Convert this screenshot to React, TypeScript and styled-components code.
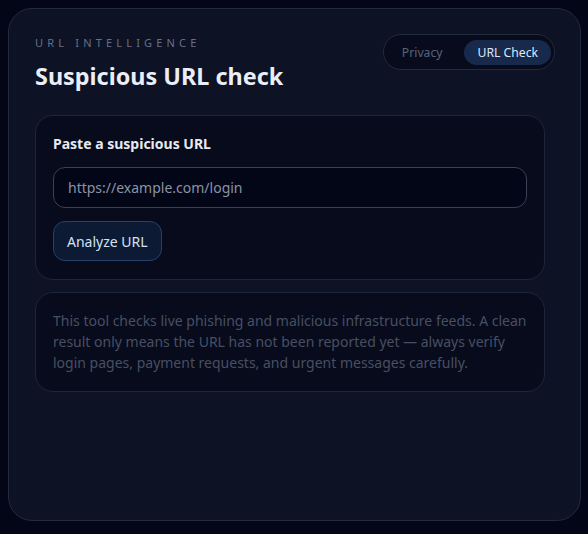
import React from 'react';
import styled, { createGlobalStyle } from 'styled-components';

const GlobalStyle = createGlobalStyle`
  html, body {
    margin: 0;
    background: #030617;
  }
  body {
    padding: 8px 8px 14px;
    font-family: 'Noto Sans', 'Open Sans', Arial, sans-serif;
  }
`;

const Card = styled.div`
  box-sizing: border-box;
  width: 573px;
  height: 513px;
  background: #0d1224;
  border: 1px solid #222a3d;
  border-radius: 24px;
  padding: 26px 26px;
`;

const Header = styled.div`
  display: flex;
  justify-content: space-between;
  align-items: flex-start;
`;

const TitleBlock = styled.div`
  display: flex;
  flex-direction: column;
`;

const Eyebrow = styled.div`
  font-size: 11px;
  letter-spacing: 0.38em;
  color: #66708a;
  line-height: 16px;
`;

const Title = styled.h1`
  margin: 10px 0 0;
  font-size: 23.4px;
  font-weight: 700;
  color: #eaeef6;
  line-height: 30px;
`;

const Toggle = styled.div`
  display: flex;
  gap: 9px;
  padding: 5px 3px 4px 5px;
  border: 1px solid #222a3d;
  background: #070b1b;
  border-radius: 999px;
  margin-top: -1px;
  margin-right: -1px;
`;

const ToggleItem = styled.button<{ $active?: boolean }>`
  font-family: inherit;
  font-size: 12.2px;
  line-height: 17px;
  height: 25px;
  border: none;
  border-radius: 999px;
  padding: 0 13px;
  background: ${(p) => (p.$active ? '#172a4c' : 'transparent')};
  color: ${(p) => (p.$active ? '#dde7fb' : '#5b6479')};
`;

const Panel = styled.div`
  box-sizing: border-box;
  max-width: 510px;
  background: #070b1b;
  border: 1px solid #1f2639;
  border-radius: 18px;
  padding: 18px 17px;
`;

const InputPanel = styled(Panel)`
  margin-top: 24px;
`;

const InfoPanel = styled(Panel)`
  margin-top: 12px;
  padding-top: 17px;
`;

const Label = styled.div`
  font-size: 14px;
  font-weight: 700;
  color: #e6eaf2;
  line-height: 20px;
`;

const UrlInput = styled.input`
  box-sizing: border-box;
  display: block;
  width: 100%;
  height: 41px;
  margin-top: 13px;
  padding: 0 14px;
  font-family: inherit;
  font-size: 14px;
  color: #c8cfdc;
  background: #030616;
  border: 1px solid #394156;
  border-radius: 12px;
  outline: none;
  &::placeholder {
    color: #8a93a6;
  }
`;

const AnalyzeButton = styled.button`
  display: block;
  margin-top: 13px;
  height: 40px;
  padding: 0 13px;
  font-family: inherit;
  font-size: 14px;
  color: #d4e1f5;
  background: #0c1a34;
  border: 1px solid #27416b;
  border-radius: 12px;
`;

const InfoText = styled.p`
  margin: 0;
  font-size: 14px;
  line-height: 21px;
  color: #474f63;
`;

const App: React.FC = () => {
  const [tab, setTab] = React.useState('url');

  return (
    <>
      <GlobalStyle />
      <Card>
        <Header>
          <TitleBlock>
            <Eyebrow>URL INTELLIGENCE</Eyebrow>
            <Title>Suspicious URL check</Title>
          </TitleBlock>
          <Toggle>
            <ToggleItem $active={tab === 'privacy'} onClick={() => setTab('privacy')}>
              Privacy
            </ToggleItem>
            <ToggleItem $active={tab === 'url'} onClick={() => setTab('url')}>
              URL Check
            </ToggleItem>
          </Toggle>
        </Header>

        <InputPanel>
          <Label>Paste a suspicious URL</Label>
          <UrlInput placeholder="https://example.com/login" />
          <AnalyzeButton>Analyze URL</AnalyzeButton>
        </InputPanel>

        <InfoPanel>
          <InfoText>
            This tool checks live phishing and malicious infrastructure feeds. A clean
            result only means the URL has not been reported yet — always verify login
            pages, payment requests, and urgent messages carefully.
          </InfoText>
        </InfoPanel>
      </Card>
    </>
  );
};

export default App;
